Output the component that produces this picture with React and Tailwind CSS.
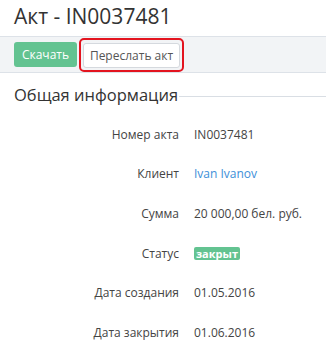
import React from "react";

const rows = [
  ["Номер акта", "IN0037481"],
  ["Клиент", "Ivan Ivanov", "link"],
  ["Сумма", "20 000,00 бел. руб."],
  ["Статус", "закрыт", "badge"],
  ["Дата создания", "01.05.2016"],
  ["Дата закрытия", "01.06.2016"],
];

export default function App() {
  return (
    <div className="w-[326px] h-[348px] bg-white overflow-hidden text-[#444]" style={{ fontFamily: '"Open Sans", sans-serif' }}>
      <h1 className="pl-[14px] h-[36px] text-[21px] leading-[30px] pt-[1px] text-[#333]">Акт - IN0037481</h1>
      <div className="h-[37px] bg-[#f2f4f6] border-t border-b border-[#dde2e8] flex items-center pl-[14px] gap-[2px]">
        <button className="h-[25px] w-[63px] rounded-[3px] bg-[#63c391] text-white text-[12px] leading-[25px]">Скачать</button>
        <div className="p-[2px] rounded-[5px] border-2 border-[#e3141f] mt-[1px]">
          <button className="h-[25px] w-[97px] rounded-[3px] bg-white border border-[#d5d9de] text-[12px] leading-[23px] text-[#555]">Переслать акт</button>
        </div>
      </div>
      <div className="flex items-center pl-[14px] mt-[11px] h-[22px]">
        <span className="text-[16.5px] leading-[22px] text-[#333]">Общая информация</span>
        <div className="flex-1 h-px bg-[#d9dee4] ml-[1px] mt-[2px]"></div>
      </div>
      <div className="mt-[9px] flex flex-col">
        {rows.map(([label, value, kind]) => (
          <div key={label} className="flex items-center h-[39.6px] text-[12px]">
            <div className="w-[179px] text-right text-[#444]">{label}</div>
            <div className="pl-[15px]">
              {kind === "link" ? (
                <span className="text-[#3d8fd8]">{value}</span>
              ) : kind === "badge" ? (
                <span className="inline-block w-[46px] text-center rounded-[2px] bg-[#63c391] text-white text-[11px] font-bold leading-[13px]">{value}</span>
              ) : (
                <span className="text-[#444]">{value}</span>
              )}
            </div>
          </div>
        ))}
      </div>
    </div>
  );
}
